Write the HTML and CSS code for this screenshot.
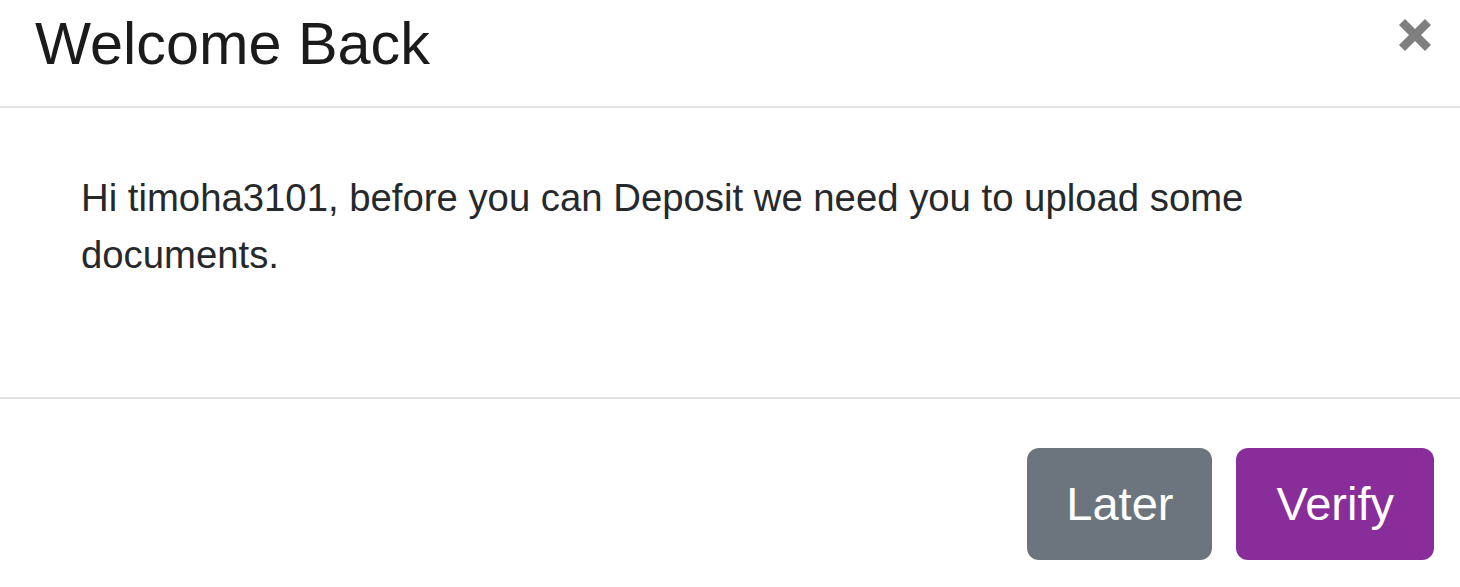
FILE: index.html
```html
<!DOCTYPE html>
<html lang="en">
<head>
<meta charset="utf-8">
<title>Welcome Back</title>
<link rel="stylesheet" href="styles.css">
</head>
<body>
<div class="modal">
  <div class="modal-header">
    <h5 class="modal-title">Welcome Back</h5>
    <button class="close" type="button" aria-label="Close">
      <svg width="34" height="34" viewBox="0 0 34 34" aria-hidden="true">
        <path d="M4 4 L30 30 M30 4 L4 30" stroke="#7f7f7f" stroke-width="8.5" fill="none"/>
      </svg>
    </button>
  </div>
  <div class="modal-body">
    <p class="message">Hi timoha3101, before you can Deposit we need you to upload some documents.</p>
  </div>
  <div class="modal-footer">
    <button class="btn btn-secondary" type="button">Later</button>
    <button class="btn btn-primary" type="button">Verify</button>
  </div>
</div>
</body>
</html>
```

FILE: styles.css
```css
html, body {
  margin: 0;
  padding: 0;
  background: #ffffff;
}

body {
  font-family: "Liberation Sans", Arial, sans-serif;
  color: #212529;
}

.modal {
  width: 1460px;
  height: 587px;
  background: #ffffff;
  overflow: hidden;
}

.modal-header {
  display: flex;
  justify-content: space-between;
  align-items: flex-start;
  padding: 8px 28px 26px 35px;
  border-bottom: 2px solid #e4e4e4;
}

.modal-title {
  margin: 0;
  font-size: 59.4px;
  font-weight: 400;
  line-height: 72px;
  color: #1b1b1b;
}

.close {
  margin-top: 10px;
  padding: 0;
  border: 0;
  background: transparent;
  width: 34px;
  height: 34px;
  display: block;
}

.close svg {
  display: block;
}

.modal-body {
  padding: 61px 81px 114px 81px;
  border-bottom: 2px solid #e4e4e4;
}

.message {
  margin: 0;
  font-size: 38.3px;
  line-height: 57px;
  color: #26292c;
}

.modal-footer {
  display: flex;
  justify-content: flex-end;
  gap: 24px;
  padding: 49px 26px 0 0;
}

.btn {
  font-family: "Liberation Sans", Arial, sans-serif;
  font-size: 47px;
  line-height: 70px;
  padding: 21px 39px;
  border: 0;
  border-radius: 12px;
  color: #ffffff;
}

.btn-secondary {
  background: #6c757d;
}

.btn-primary {
  background: #892d9b;
  padding: 21px 40px;
}
```
